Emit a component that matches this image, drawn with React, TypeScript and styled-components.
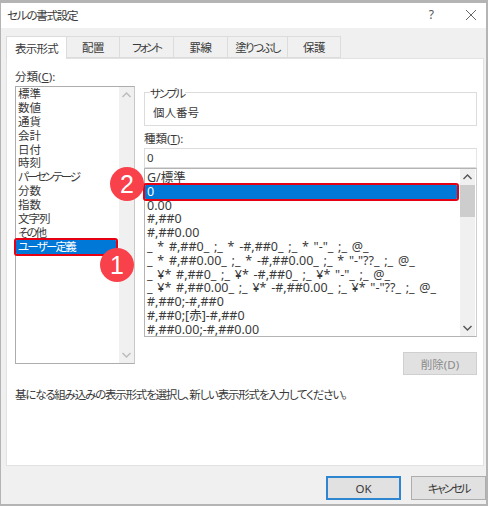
import { FunctionComponent } from "react";
import styled, { createGlobalStyle } from "styled-components";

const GlobalStyle = createGlobalStyle`
  html, body {
    margin: 0;
    padding: 0;
    background: #b4b4b4;
  }
  * {
    box-sizing: border-box;
  }
`;

// kana in the original dialog font is much narrower, so tight is per label
const TABS = [
  { label: "表示形式", width: 61, tight: -0.7 },
  { label: "配置", width: 53, tight: -0.5 },
  { label: "フォント", width: 54, tight: -2.2 },
  { label: "罫線", width: 54, tight: -0.5 },
  { label: "塗りつぶし", width: 60, tight: -1.6 },
  { label: "保護", width: 53, tight: -0.5 },
];
const CATEGORIES = [
  { label: "標準", tight: 0 },
  { label: "数値", tight: 0 },
  { label: "通貨", tight: 0 },
  { label: "会計", tight: 0 },
  { label: "日付", tight: 0 },
  { label: "時刻", tight: 0 },
  { label: "パーセンテージ", tight: -2.2 },
  { label: "分数", tight: 0 },
  { label: "指数", tight: 0 },
  { label: "文字列", tight: -1 },
  { label: "その他", tight: -2 },
  { label: "ユーザー定義", tight: -1.8 },
];
const FORMATS = [
  "G/標準",
  "0",
  "0.00",
  "#,##0",
  "#,##0.00",
  '_ * #,##0_ ;_ * -#,##0_ ;_ * "-"_ ;_ @_',
  '_ * #,##0.00_ ;_ * -#,##0.00_ ;_ * "-"??_ ;_ @_',
  '_ ¥* #,##0_ ;_ ¥* -#,##0_ ;_ ¥* "-"_ ;_ @_',
  '_ ¥* #,##0.00_ ;_ ¥* -#,##0.00_ ;_ ¥* "-"??_ ;_ @_',
  "#,##0;-#,##0",
  "#,##0;[赤]-#,##0",
  "#,##0.00;-#,##0.00",
];

const Arrow: FunctionComponent<{ up?: boolean; color?: string }> = ({ up, color }) => (
  <svg width="15" height="16" viewBox="0 0 15 16">
    <path
      d={up ? "M3.5 10 L7.5 6 L11.5 10" : "M3.5 6 L7.5 10 L11.5 6"}
      fill="none"
      stroke={color || "#555"}
      strokeWidth="1.4"
    />
  </svg>
);

const App: FunctionComponent = () => {
  return (
    <Screen>
      <GlobalStyle />
      <Window>
        <TitleBar>
          <Title>セルの書式設定</Title>
          <HelpMark>?</HelpMark>
          <CloseIcon width="12" height="12" viewBox="0 0 12 12">
            <path d="M1 1 L11 11 M11 1 L1 11" stroke="#555" strokeWidth="0.9" fill="none" />
          </CloseIcon>
        </TitleBar>
        <Body>
          <TabRow>
            {TABS.map((tab, index) => (
              <Tab key={tab.label} $active={index === 0} $width={tab.width} $tight={tab.tight}>
                {tab.label}
              </Tab>
            ))}
          </TabRow>
          <Panel>
            <Columns>
              <LeftColumn>
                <FieldLabel>
                  分類(<u>C</u>):
                </FieldLabel>
                <CategoryBox>
                  <CategoryList>
                    {CATEGORIES.map((item, index) => (
                      <ListRow
                        key={item.label}
                        $selected={index === CATEGORIES.length - 1}
                        $tight={item.tight}
                      >
                        {item.label}
                      </ListRow>
                    ))}
                  </CategoryList>
                  <ScrollTrack>
                    <ScrollButton>
                      <Arrow up color="#bbb" />
                    </ScrollButton>
                    <ScrollButton>
                      <Arrow color="#bbb" />
                    </ScrollButton>
                  </ScrollTrack>
                  <BadgeOne>1</BadgeOne>
                </CategoryBox>
              </LeftColumn>
              <RightColumn>
                <SampleGroup>
                  <SampleLegend>サンプル</SampleLegend>
                  <SampleValue>個人番号</SampleValue>
                </SampleGroup>
                <TypeLabel>
                  種類(<u>T</u>):
                </TypeLabel>
                <TypeInput>0</TypeInput>
                <FormatBox>
                  <FormatList>
                    {FORMATS.map((item, index) => (
                      <FormatRow key={item} $selected={index === 1}>
                        {item}
                      </FormatRow>
                    ))}
                  </FormatList>
                  <ScrollTrack>
                    <ScrollButton>
                      <Arrow up />
                    </ScrollButton>
                    <ScrollThumb />
                    <ScrollSpacer />
                    <ScrollButton>
                      <Arrow />
                    </ScrollButton>
                  </ScrollTrack>
                  <BadgeTwo>2</BadgeTwo>
                </FormatBox>
                <DeleteRow>
                  <DeleteButton>削除(D)</DeleteButton>
                </DeleteRow>
              </RightColumn>
            </Columns>
            <Description>
              基になる組み込みの表示形式を選択し、新しい表示形式を入力してください。
            </Description>
          </Panel>
          <Footer>
            <DialogButton $primary>OK</DialogButton>
            <DialogButton $tight={-2.2}>キャンセル</DialogButton>
          </Footer>
        </Body>
      </Window>
    </Screen>
  );
};

interface StylesProps {
  $active?: boolean;
  $selected?: boolean;
  $primary?: boolean;
  $width?: number;
  $tight?: number;
}

const FONT = `"Noto Sans", "Noto Sans CJK JP", sans-serif`;

const Screen = styled.div`
  width: 488px;
  height: 506px;
  padding: 3px 2px 2px 1px;
  overflow: hidden;
  font-family: ${FONT};
  font-size: 11.5px;
  font-feature-settings: "palt";
  color: #3a3a3a;
`;

const Window = styled.div`
  width: 100%;
  height: 100%;
  display: flex;
  flex-direction: column;
  background: #f0f0f0;
`;

const TitleBar = styled.div`
  height: 25px;
  display: flex;
  align-items: center;
  padding: 0 9px 2px 6px;
  background: #fff;
`;

const Title = styled.div`
  flex: 1;
  font-size: 11.5px;
  letter-spacing: -1.2px;
`;

const HelpMark = styled.span`
  font-size: 12px;
  margin-right: 31px;
  color: #555;
`;

const CloseIcon = styled.svg`
  display: block;
`;

const Body = styled.div`
  flex: 1;
  display: flex;
  flex-direction: column;
  padding: 8px 0 0 5px;
`;

const TabRow = styled.div`
  display: flex;
  height: 22px;
  position: relative;
  z-index: 1;
`;

const Tab = styled.div<StylesProps>`
  width: ${(props) => props.$width}px;
  height: ${(props) => (props.$active ? "23px" : "22px")};
  display: flex;
  align-items: center;
  justify-content: center;
  font-size: 11.5px;
  letter-spacing: ${(props) => props.$tight}px;
  background: ${(props) => (props.$active ? "#fff" : "#f0f0f0")};
  border: 1px solid #dcdcdc;
  border-left-width: ${(props) => (props.$active ? "1px" : "0")};
  border-bottom-width: ${(props) => (props.$active ? "0" : "1px")};
`;

const Panel = styled.div`
  width: 478px;
  height: 408px;
  background: #fff;
  border: 1px solid #e2e2e2;
  padding: 11px 0 0 8px;
`;

const Columns = styled.div`
  display: flex;
  gap: 9px;
`;

const LeftColumn = styled.div`
  width: 120px;
`;

const RightColumn = styled.div`
  width: 333px;
  padding-top: 22px;
`;

const FieldLabel = styled.div`
  height: 16px;
  line-height: 14px;
  font-size: 11.5px;
`;

const CategoryBox = styled.div`
  position: relative;
  height: 278px;
  display: flex;
  border: 1px solid #adadad;
  border-color: #adadad #c8c8c8 #adadad #adadad;
`;

const CategoryList = styled.div`
  flex: 1;
  min-width: 0;
  padding-right: 3px;
`;

const ListRow = styled.div<StylesProps>`
  position: relative;
  height: 13.9px;
  line-height: 14px;
  padding-left: 2px;
  font-size: 11.5px;
  letter-spacing: ${(props) => props.$tight}px;
  white-space: nowrap;
  background: ${(props) => (props.$selected ? "#0078d7" : "transparent")};
  color: ${(props) => (props.$selected ? "#fff" : "inherit")};
  ${(props) =>
    props.$selected &&
    `
    outline: 2.5px solid #e60012;
    border-radius: 1px;
    z-index: 1;
  `}
`;

const ScrollTrack = styled.div`
  width: 15px;
  flex-shrink: 0;
  display: flex;
  flex-direction: column;
  justify-content: space-between;
  background: #f0f0f0;
`;

const ScrollButton = styled.div`
  height: 16px;
  display: flex;
  align-items: center;
  justify-content: center;
`;

const ScrollThumb = styled.div`
  height: 32px;
  background: #cdcdcd;
`;

const ScrollSpacer = styled.div`
  flex: 1;
`;

const Badge = styled.div`
  position: absolute;
  z-index: 2;
  width: 34px;
  height: 34px;
  border-radius: 50%;
  background: #f8414a;
  color: #fff;
  font-size: 25px;
  font-family: "Liberation Sans", sans-serif;
  display: flex;
  align-items: center;
  justify-content: center;
`;

const BadgeOne = styled(Badge)`
  left: 84px;
  top: 161px;
`;

const BadgeTwo = styled(Badge)`
  left: -35px;
  top: -2px;
`;

const SampleGroup = styled.fieldset`
  margin: 0;
  height: 34px;
  padding: 0 0 0 8px;
  border: 1px solid #dcdcdc;
  position: relative;
`;

const SampleLegend = styled.legend`
  padding: 0 1px 0 0;
  margin-left: -3px;
  font-size: 11.5px;
  letter-spacing: -2px;
  line-height: 1px;
  position: relative;
  top: 1px;
`;

const SampleValue = styled.div`
  margin-top: 13px;
  font-size: 11.5px;
  line-height: 14px;
`;

const TypeLabel = styled.div`
  margin-top: 6px;
  height: 16px;
  line-height: 14px;
  font-size: 11.5px;
`;

const TypeInput = styled.div`
  height: 20px;
  line-height: 17px;
  padding-left: 2px;
  font-size: 11.5px;
  border: 1px solid #dcdcdc;
  border-right-color: #e6e6e6;
`;

const FormatBox = styled.div`
  position: relative;
  height: 169px;
  display: flex;
  padding-right: 1px;
  border: 1px solid #b4b4b4;
  border-right-color: #d0d0d0;
`;

const FormatList = styled.div`
  flex: 1;
  min-width: 0;
  padding: 2px 3px 0 0;
`;

const FormatRow = styled.div<StylesProps>`
  position: relative;
  height: 13.8px;
  line-height: 14px;
  padding-left: 2px;
  font-size: 12.5px;
  word-spacing: 1.5px;
  white-space: nowrap;
  background: ${(props) => (props.$selected ? "#0078d7" : "transparent")};
  color: ${(props) => (props.$selected ? "#fff" : "inherit")};
  ${(props) =>
    props.$selected &&
    `
    outline: 2.5px solid #e60012;
    border-radius: 1px;
  `}
`;

const DeleteRow = styled.div`
  display: flex;
  justify-content: flex-end;
  margin-top: 15px;
`;

const DeleteButton = styled.div`
  width: 74px;
  height: 23px;
  display: flex;
  align-items: center;
  justify-content: center;
  font-size: 11.5px;
  color: #8a8a8a;
  background: #e1e1e1;
  border: 1px solid #cfcfcf;
`;

const Description = styled.div`
  margin-top: 12px;
  font-size: 11.5px;
  letter-spacing: -1.2px;
  line-height: 16px;
`;

const Footer = styled.div`
  display: flex;
  justify-content: flex-end;
  gap: 10px;
  padding-top: 10px;
`;

const DialogButton = styled.div<StylesProps>`
  width: 75px;
  height: 24px;
  display: flex;
  align-items: center;
  justify-content: center;
  font-size: 11.5px;
  letter-spacing: ${(props) => props.$tight || 0}px;
  background: #e1e1e1;
  border: ${(props) => (props.$primary ? "1px solid #2f86d0" : "1px solid #adadad")};
  box-shadow: ${(props) => (props.$primary ? "inset 0 0 0 1px #2f86d0" : "none")};
`;

export default App;
